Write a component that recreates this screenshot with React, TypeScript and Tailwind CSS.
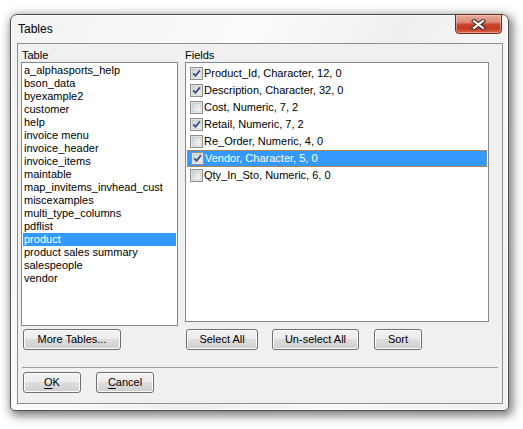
import React from "react";

const tables = [
  "a_alphasports_help",
  "bson_data",
  "byexample2",
  "customer",
  "help",
  "invoice menu",
  "invoice_header",
  "invoice_items",
  "maintable",
  "map_invitems_invhead_cust",
  "miscexamples",
  "multi_type_columns",
  "pdflist",
  "product",
  "product sales summary",
  "salespeople",
  "vendor",
];

const fields: { name: string; checked: boolean }[] = [
  { name: "Product_Id, Character, 12, 0", checked: true },
  { name: "Description, Character, 32, 0", checked: true },
  { name: "Cost, Numeric, 7, 2", checked: false },
  { name: "Retail, Numeric, 7, 2", checked: true },
  { name: "Re_Order, Numeric, 4, 0", checked: false },
  { name: "Vendor, Character, 5, 0", checked: true },
  { name: "Qty_In_Sto, Numeric, 6, 0", checked: false },
];

function CheckBox({ checked }: { checked: boolean }) {
  return (
    <svg width="13" height="13" viewBox="0 0 13 13" className="shrink-0">
      <defs>
        <linearGradient id="cbg" x1="0" y1="0" x2="1" y2="1">
          <stop offset="0" stopColor="#cfd2d6" />
          <stop offset="1" stopColor="#f8f8f8" />
        </linearGradient>
      </defs>
      <rect x="0.5" y="0.5" width="12" height="12" fill="#f4f4f4" stroke="#8e8f8f" />
      <rect x="2" y="2" width="9" height="9" fill="url(#cbg)" stroke="#b4b8bd" strokeWidth="0.6" />
      {checked && (
        <path
          d="M3.3 6.4 L5.5 8.9 L9.9 3.4"
          fill="none"
          stroke="#3d5189"
          strokeWidth="1.8"
          strokeLinejoin="round"
        />
      )}
    </svg>
  );
}

function Btn({ w, children }: { w: string; children: React.ReactNode }) {
  return (
    <div
      className={`${w} h-[21px] shrink-0 rounded-[3px] border border-[#707070] bg-[linear-gradient(#f2f2f2_0%,#ebebeb_50%,#dddddd_50%,#cfcfcf_100%)] shadow-[inset_0_0_0_1px_#fcfcfc] flex items-center justify-center text-[11px] leading-[13px] text-black`}
    >
      {children}
    </div>
  );
}

export default function App() {
  return (
    <div
      className="w-[523px] h-[429px] bg-white pl-[10px] pt-[14px] overflow-hidden"
      style={{ fontFamily: '"Liberation Sans", Arial, sans-serif' }}
    >
      <div className="relative w-[499px] h-[397px] rounded-t-[7px] rounded-b-[5px] border border-[#4e4e4e] bg-[linear-gradient(120deg,#f3f3f3_0%,#fbfbfb_35%,#efefef_55%,#f8f8f8_75%,#f0f0f0_100%)] shadow-[inset_0_0_0_1px_#ffffffcc,2px_3px_10px_2px_rgba(0,0,0,0.5)] pl-[6px] pr-[5px] pb-[6px] flex flex-col">
        {/* Title bar */}
        <div className="h-[28px] flex items-center pl-[1px] text-[12px] text-black">
          Tables
        </div>

        {/* Close button */}
        <div className="absolute top-[-1px] left-[444px] w-[47px] h-[20px] rounded-b-[4px] border border-[#6d2a1f] bg-[linear-gradient(#e7ab9e_0%,#dc8b78_40%,#c8472f_52%,#c23b22_75%,#d66a50_100%)] shadow-[inset_0_0_0_1px_rgba(255,220,210,0.45)] flex items-center justify-center">
          <svg width="15" height="11" viewBox="0 0 15 11">
            <path d="M3 2 L12 9 M12 2 L3 9" stroke="#3f2a26" strokeWidth="4.2" strokeLinecap="square" />
            <path d="M3 2 L12 9 M12 2 L3 9" stroke="#ffffff" strokeWidth="2.2" strokeLinecap="square" />
          </svg>
        </div>

        {/* Client area */}
        <div className="w-[486px] h-[361px] border border-[#8e8e8e] bg-[#f0f0f0] flex flex-col text-[11px] text-black">
          <div className="flex pl-[3px] gap-[7px]">
            {/* Left column */}
            <div className="w-[157px] flex flex-col">
              <div className="mt-[4px] h-[14px] leading-[14px] pl-[1px]">Table</div>
              <div className="h-[264px] border border-[#828790] bg-white p-[1px]">
                {tables.map((t) => (
                  <div
                    key={t}
                    className={`h-[13px] leading-[13px] pl-[1px] whitespace-nowrap ${
                      t === "product" ? "bg-[#3399ff] text-white" : ""
                    }`}
                  >
                    {t}
                  </div>
                ))}
              </div>
              <div className="mt-[3px] pl-[2px] flex">
                <Btn w="w-[98px]">More Tables...</Btn>
              </div>
            </div>

            {/* Right column */}
            <div className="w-[304px] flex flex-col">
              <div className="mt-[4px] h-[14px] leading-[14px]">Fields</div>
              <div className="h-[260px] border border-[#828790] bg-white pt-[2px] px-[1px]">
                {fields.map((f, i) => {
                  const sel = i === 5;
                  return (
                    <div
                      key={f.name}
                      className={`h-[17px] flex items-center pl-[3px] whitespace-nowrap ${
                        sel ? "bg-[#3399ff] text-white border border-dotted border-[#b98a55] pl-[2px]" : ""
                      }`}
                    >
                      <CheckBox checked={f.checked} />
                      <span className="leading-[13px] pl-[1px]">{f.name}</span>
                    </div>
                  );
                })}
              </div>
              <div className="mt-[7px] pl-[1px] flex">
                <Btn w="w-[72px]">Select All</Btn>
                <div className="w-[14px]" />
                <Btn w="w-[87px]">Un-select All</Btn>
                <div className="w-[15px]" />
                <Btn w="w-[48px]">Sort</Btn>
              </div>
            </div>
          </div>

          <div className="mt-[17px] mx-[4px] h-px bg-[#a0a0a0]" />

          <div className="mt-[4px] pl-[5px] flex gap-[15px]">
            <Btn w="w-[58px]">
              <span className="underline underline-offset-[2px]">O</span>K
            </Btn>
            <Btn w="w-[58px]">
              <span className="underline underline-offset-[2px]">C</span>ancel
            </Btn>
          </div>
        </div>
      </div>
    </div>
  );
}
